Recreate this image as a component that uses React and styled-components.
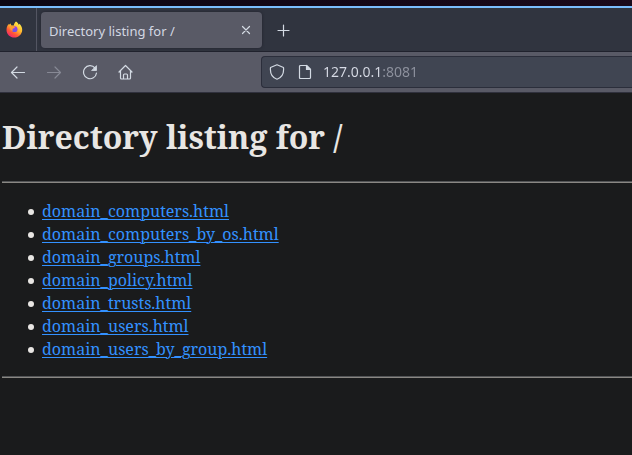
import React from "react";
import styled, { createGlobalStyle } from "styled-components";

const GlobalStyle = createGlobalStyle`
  * { box-sizing: border-box; }
  body {
    margin: 0;
    background: #1a1b1c;
    font-family: "Noto Sans", sans-serif;
  }
`;

const Window = styled.div`
  display: flex;
  flex-direction: column;
  min-height: 100vh;
  overflow: hidden;
`;

const Desktop = styled.div`
  height: 6px;
  background: linear-gradient(90deg, #0c0714, #130716 45%, #1b0a1b);
`;

const TabStrip = styled.header`
  display: flex;
  align-items: center;
  height: 46px;
  border-top: 2px solid #7abdfd;
  border-bottom: 1px solid #20222d;
  background: #30343f;
`;

const PinnedArea = styled.div`
  display: flex;
  align-items: center;
  align-self: stretch;
  width: 37px;
  padding-left: 6px;
  border-right: 1px solid #535562;
`;

const Tab = styled.div`
  display: flex;
  align-items: center;
  justify-content: space-between;
  width: 221px;
  height: 36px;
  margin: 0 9px 0 4px;
  padding: 0 4px 0 8px;
  border-radius: 4px;
  background: #595a66;
  box-shadow: 0 0 3px #20222d;
  color: #d3d7e2;
  font-size: 13px;
  line-height: 20px;
`;

const TabTitle = styled.span`
  padding-top: 2px;
`;

const IconButton = styled.button`
  display: flex;
  align-items: center;
  justify-content: center;
  width: 24px;
  height: 24px;
  padding: 0;
  border: 0;
  border-radius: 4px;
  background: none;
  color: #d3dae3;

  &:disabled { color: #878995; }
`;

const Toolbar = styled.nav`
  display: flex;
  align-items: center;
  gap: 12px;
  height: 41px;
  padding-left: 6px;
  border-bottom: 1px solid #30313d;
  background: #595a66;
`;

const AddressBar = styled.label`
  display: flex;
  align-items: center;
  gap: 12px;
  flex: 1;
  height: 32px;
  margin-left: 111px;
  padding-left: 7px;
  border: 1px solid #2b2e3b;
  border-right: 0;
  border-radius: 4px 0 0 4px;
  background: #404552;
  color: #d3dae3;
`;

const HOST_WIDTH = 59;

const AddressInput = styled.input`
  flex: 1;
  min-width: 0;
  height: 24px;
  margin: 0 12px 2px -2px;
  padding: 0;
  border: 0;
  outline: 0;
  background: linear-gradient(90deg, #d8dce6 ${HOST_WIDTH}px, #8e929e ${HOST_WIDTH}px);
  background-clip: text;
  -webkit-text-fill-color: transparent;
  font: 14px "Noto Sans", sans-serif;
`;

const Page = styled.main`
  flex: 1;
  padding-left: 2px;
  color: #e8e6e3;
  font: 16px/23px "Noto Serif", "Droid Serif", "Liberation Serif", serif;
`;

const Title = styled.h1`
  margin: 22px 0;
  font-size: 32px;
  line-height: 44px;
`;

const Rule = styled.hr`
  height: 2px;
  margin: 0;
  border: 0;
  border-top: 1px solid #525456;
  background: #8a8884;
`;

const FileList = styled.ul`
  margin: 17px 0 15px;
  padding-left: 26px;
  list-style: none;
`;

const FileItem = styled.li`
  display: flex;
  align-items: center;
  gap: 8px;

  &::before {
    content: "";
    width: 6px;
    height: 6px;
    border-radius: 50%;
    background: #e8e6e3;
  }
`;

const FileLink = styled.a`
  color: #3391ff;
  text-decoration-thickness: 1px;
  text-underline-offset: 2px;
`;

function FirefoxIcon() {
  return (
    <svg width="17" height="17" viewBox="0 0 17 17" aria-label="Firefox" role="img">
      <defs>
        <linearGradient id="flame" x1="0.85" y1="0.1" x2="0.25" y2="1">
          <stop offset="0" stopColor="#fff04a" />
          <stop offset="0.4" stopColor="#ffb52e" />
          <stop offset="0.7" stopColor="#ff5636" />
          <stop offset="1" stopColor="#f02274" />
        </linearGradient>
        <linearGradient id="globe" x1="0.5" y1="0" x2="0.4" y2="1">
          <stop offset="0" stopColor="#a33be8" />
          <stop offset="1" stopColor="#6457e5" />
        </linearGradient>
      </defs>
      <path
        fill="url(#flame)"
        d="M10 .6c1.6 1 2.1 2 2.7 3.1.5-.1.6-.6.7-1 1.7 1.4 2.8 3.8 2.8 6 0 4.5-3.5 7.8-7.8 7.8S.5 13.2.5 8.9c0-2.6.9-4.6 2.3-6.2v1.3c.7-.8 1.3-1.3 2-1.5-.1.9.2 1.5.7 2h2.3C8 2.9 8.8 1.5 10 .6z"
      />
      <circle cx="8.6" cy="8.2" r="2.9" fill="url(#globe)" />
      <path fill="#ff9e2c" d="M3.5 5.3c1.7-.8 3.5-.7 4.8.1l.7 1.1c-.6.7-1.7.8-2.3 1.3-.4.5-.1 1.3.5 1.7-1.5.3-2.8-.8-3-2.1z" />
    </svg>
  );
}

function Glyph({ size = 16, children }) {
  return (
    <svg
      width={size}
      height={size}
      viewBox={`0 0 ${size} ${size}`}
      fill="none"
      stroke="currentColor"
      strokeWidth="1.2"
      strokeLinecap="round"
      strokeLinejoin="round"
      aria-hidden="true"
    >
      {children}
    </svg>
  );
}

const files = [
  "domain_computers.html",
  "domain_computers_by_os.html",
  "domain_groups.html",
  "domain_policy.html",
  "domain_trusts.html",
  "domain_users.html",
  "domain_users_by_group.html",
];

export default function App() {
  return (
    <Window>
      <GlobalStyle />
      <Desktop />
      <TabStrip>
        <PinnedArea>
          <FirefoxIcon />
        </PinnedArea>
        <Tab>
          <TabTitle>Directory listing for /</TabTitle>
          <IconButton aria-label="Close tab">
            <Glyph size={10}><path d="M1.5 1.5l7 7m0-7l-7 7" /></Glyph>
          </IconButton>
        </Tab>
        <IconButton aria-label="New tab">
          <Glyph><path d="M8.5 3v11M3 8.5h11" /></Glyph>
        </IconButton>
      </TabStrip>
      <Toolbar>
        <IconButton aria-label="Back">
          <Glyph><path d="M14.5 8.5h-13M7 3L1.5 8.5 7 14" /></Glyph>
        </IconButton>
        <IconButton aria-label="Forward" disabled>
          <Glyph><path d="M1.5 8.5h13M9 3l5.5 5.5L9 14" /></Glyph>
        </IconButton>
        <IconButton aria-label="Reload">
          <Glyph>
            <path d="M13 4A6.5 6.5 0 1 0 14.5 9" />
            <path d="M14.5 2v4.5H10z" fill="currentColor" strokeWidth="0.8" />
          </Glyph>
        </IconButton>
        <IconButton aria-label="Home">
          <Glyph>
            <path d="M1 8l6.5-6.5L14 8M2.5 7v7q0 1 1 1h8q1 0 1-1V7M5.5 15v-4q0-1 1-1h2q1 0 1 1v4" />
          </Glyph>
        </IconButton>
        <AddressBar>
          <Glyph>
            <path d="M8 .8L14.5 3.5c.5 5-1.5 10-6.5 11.7C3 13.5 1 8.5 1.5 3.5z" />
          </Glyph>
          <Glyph>
            <path d="M3.5 1.5H9.5L13.5 5.5v8q0 1-1 1h-9q-1 0-1-1v-11q0-1 1-1z" />
            <path d="M9.5 1.5v4h4z" fill="currentColor" />
          </Glyph>
          <AddressInput aria-label="Address" defaultValue="127.0.0.1:8081" />
        </AddressBar>
      </Toolbar>
      <Page>
        <Title>Directory listing for /</Title>
        <Rule />
        <FileList>
          {files.map((name) => (
            <FileItem key={name}>
              <FileLink href={name}>{name}</FileLink>
            </FileItem>
          ))}
        </FileList>
        <Rule />
      </Page>
    </Window>
  );
}
